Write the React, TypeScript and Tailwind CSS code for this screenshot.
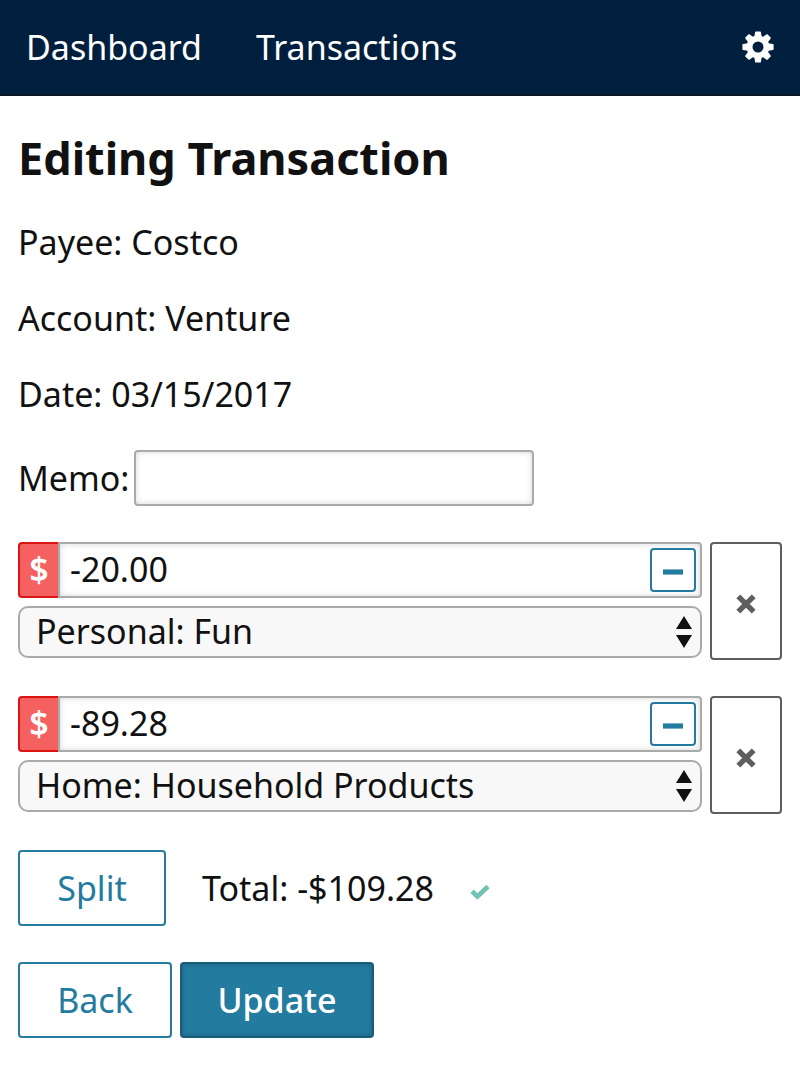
import { useState } from "react";

const TEETH = [0, 45, 90, 135, 180, 225, 270, 315];

function GearIcon() {
  return (
    <svg viewBox="-16 -16 32 32" className="size-8" fill="currentColor" aria-hidden="true">
      <path
        fillRule="evenodd"
        d="M0-11.4A11.4 11.4 0 1 1 0 11.4A11.4 11.4 0 1 1 0-11.4ZM0-5.5A5.5 5.5 0 1 0 0 5.5A5.5 5.5 0 1 0 0-5.5Z"
      />
      {TEETH.map((angle) => (
        <path
          key={angle}
          transform={`rotate(${angle})`}
          d="M-2.3-15.6H2.3Q2.8-15.6 2.9-15L3.7-10H-3.7L-2.9-15Q-2.8-15.6-2.3-15.6Z"
        />
      ))}
    </svg>
  );
}

function CrossIcon() {
  return (
    <svg viewBox="0 0 20 20" className="size-5" stroke="currentColor" strokeWidth="5.4" aria-hidden="true">
      <path d="M2.3 2.3L17.7 17.7M17.7 2.3L2.3 17.7" />
    </svg>
  );
}

function CheckIcon() {
  return (
    <svg viewBox="0 0 20 16" className="h-4 w-5 text-[#73c2b6]" fill="none" stroke="currentColor" strokeWidth="4.8" aria-hidden="true">
      <path d="M2 7.2L7.4 12.4L18 2.4" />
    </svg>
  );
}

const CATEGORIES = ["Personal: Fun", "Home: Household Products"];

function SplitRow({ index, amount, category }: { index: number; amount: string; category: string }) {
  const [value, setValue] = useState(amount);
  return (
    <div className="flex gap-2">
      <div className="flex min-w-0 flex-1 flex-col gap-2 pb-0.5">
        <div className="flex h-14">
          <label
            htmlFor={`amount-${index}`}
            className="flex w-10 shrink-0 items-center justify-center rounded-l border-2 border-r-0 border-[#dc1414] bg-[#f56060] pb-0.5 font-semibold text-white"
          >
            $
          </label>
          <div className="flex min-w-0 flex-1 items-center rounded-r border-2 border-[#aaa] pr-1 shadow-[inset_0_0_6px_rgba(0,0,0,0.16)]">
            <input
              id={`amount-${index}`}
              value={value}
              onChange={(e) => setValue(e.target.value)}
              className="h-full min-w-0 flex-1 bg-transparent pb-0.5 pl-2.5 outline-none"
            />
            <button
              type="button"
              aria-label="Toggle sign"
              className="flex h-11 w-[46px] items-center justify-center rounded border-2 border-[#247ba0] bg-white text-[#247ba0]"
            >
              <svg viewBox="0 0 20 6" className="mt-1 h-1.5 w-5" aria-hidden="true">
                <path fill="currentColor" d="M0 .4H20V5.6H0Z" />
              </svg>
            </button>
          </div>
        </div>
        <div className="relative">
          <select
            aria-label="Category"
            defaultValue={category}
            className="block h-[52px] w-full appearance-none rounded-[10px] border-2 border-[#aaa] bg-[#f8f8f8] pr-10 pb-0.5 pl-4 leading-10"
          >
            {CATEGORIES.map((name) => (
              <option key={name}>{name}</option>
            ))}
          </select>
          <svg
            viewBox="0 0 16 32"
            className="pointer-events-none absolute top-2.5 right-2.5 h-8 w-4"
            fill="currentColor"
            aria-hidden="true"
          >
            <path d="M8 0L16 13H0ZM0 19H16L8 32Z" />
          </svg>
        </div>
      </div>
      <button
        type="button"
        aria-label="Remove"
        className="flex w-[72px] items-center justify-center rounded border-2 border-[#5e5e5e] pt-1.5 text-[#5e5e5e]"
      >
        <CrossIcon />
      </button>
    </div>
  );
}

export default function App() {
  return (
    <div className="min-h-screen bg-white font-['Noto_Sans',sans-serif] text-[34px] leading-10 text-[#111]">
      <header className="flex h-24 items-center justify-between border-b-2 border-[#0a1826] bg-[#001f3f] px-[26px] text-white">
        <nav className="flex gap-[54px]">
          <a href="#dashboard">Dashboard</a>
          <a href="#transactions">Transactions</a>
        </nav>
        <a href="#settings" aria-label="Settings">
          <GearIcon />
        </a>
      </header>
      <main className="flex flex-col gap-9 px-[18px] pt-[34px] pb-[30px]">
        <h1 className="text-[45px] leading-14 font-bold">Editing Transaction</h1>
        <p>Payee: Costco</p>
        <p>Account: Venture</p>
        <p>Date: 03/15/2017</p>
        <div className="flex items-center gap-1">
          <label htmlFor="memo">Memo:</label>
          <input
            id="memo"
            className="h-14 w-[400px] rounded border-2 border-[#aaa] px-2.5 shadow-[inset_0_0_6px_rgba(0,0,0,0.16)]"
          />
        </div>
        <SplitRow index={0} amount="-20.00" category="Personal: Fun" />
        <SplitRow index={1} amount="-89.28" category="Home: Household Products" />
        <div className="flex items-center gap-9">
          <button type="button" className="h-19 w-[148px] rounded border-2 border-[#247ba0] text-[#247ba0]">
            Split
          </button>
          <span>Total: -$109.28</span>
          <span className="pt-2">
            <CheckIcon />
          </span>
        </div>
        <div className="flex gap-2">
          <button type="button" className="h-19 w-[154px] rounded border-2 border-[#247ba0] text-[#247ba0]">
            Back
          </button>
          <button
            type="submit"
            className="h-19 w-[194px] rounded border-2 border-[#1b5c78] bg-[#247ba0] font-medium text-white shadow-[inset_0_0_4px_rgba(0,0,0,0.25)]"
          >
            Update
          </button>
        </div>
      </main>
    </div>
  );
}
